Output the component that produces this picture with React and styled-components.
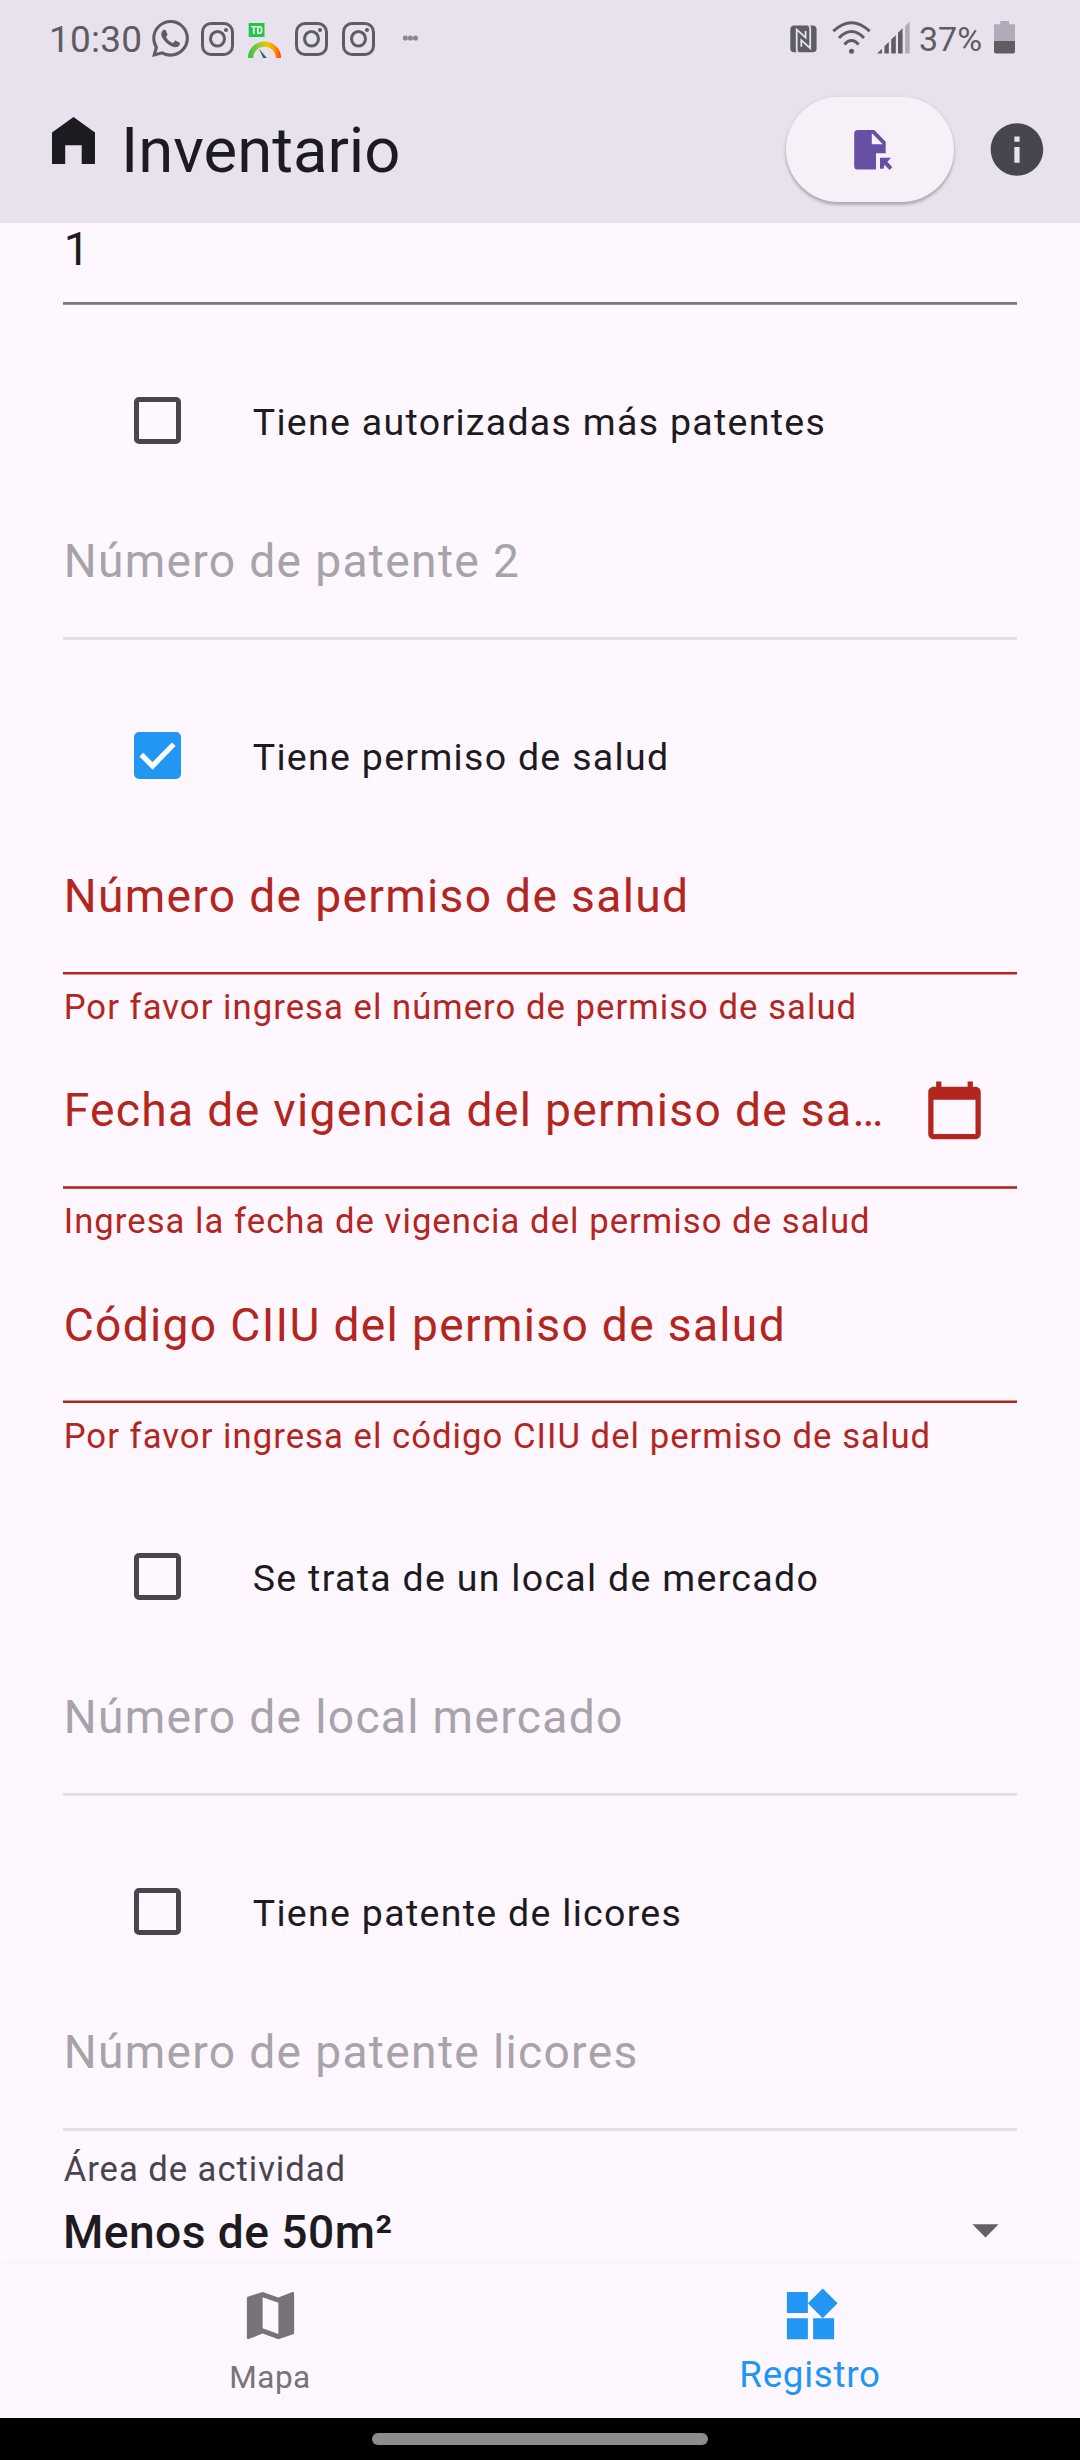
import React from "react";
import styled, { createGlobalStyle } from "styled-components";
import { SiWhatsapp } from "react-icons/si";

const color = {
  bar: "#E8E2EF",
  surface: "#FEF7FF",
  ink: "#1D1B20",
  variant: "#49454F",
  error: "#B3261E",
  blue: "#2196F3",
  status: "#5F5C62",
  disabled: "#A8A3AA",
};

const GlobalStyle = createGlobalStyle`
  * { box-sizing: border-box; }
  body {
    margin: 0;
    background: ${color.surface};
    font-family: "Roboto", "Noto Sans", sans-serif;
    color: ${color.ink};
  }
  svg { display: block; flex: none; }
`;

const Screen = styled.div`
  width: 1080px;
  height: 2460px;
  display: flex;
  flex-direction: column;
  overflow: hidden;
  background: ${color.surface};
`;

const Header = styled.header`
  height: 223px;
  flex: none;
  background: ${color.bar};
`;

const StatusBar = styled.div`
  height: 76px;
  display: flex;
  align-items: center;
  justify-content: space-between;
  padding: 0 65px 0 49px;
  color: ${color.status};
`;

const StatusGroup = styled.div`
  display: flex;
  align-items: center;
  height: 100%;
`;

const Clock = styled.span`
  width: 103px;
  font-size: 37px;
  letter-spacing: 0.25px;
  line-height: 44px;
  padding-top: 3px;
`;

const WhatsappGlyph = styled(SiWhatsapp)`
  width: 37px;
  height: 37px;
  margin-right: 12px;
`;

const Percent = styled.span`
  width: 75px;
  font-size: 34px;
  line-height: 40px;
  padding-top: 2px;
`;

const AppBar = styled.div`
  height: 147px;
  display: flex;
  align-items: center;
  padding-right: 31px;
`;

const HomeGlyph = styled.svg`
  margin: -18px 26px 0 52px;
`;

const Title = styled.h1`
  flex: 1;
  margin: 0;
  font-size: 63.4px;
  font-weight: 400;
  line-height: 76px;
`;

const PillButton = styled.button`
  width: 168px;
  height: 105px;
  margin-right: 32px;
  padding: 0;
  border: 0;
  border-radius: 53px;
  background: #f6f1f9;
  box-shadow: 0 3px 3px rgba(0, 0, 0, 0.2), 0 1px 5px rgba(0, 0, 0, 0.1);
  display: flex;
  align-items: center;
  justify-content: center;
`;

const Form = styled.main`
  flex: 1;
  min-height: 0;
  overflow: hidden;
  padding: 0 63px;
`;

const FieldBox = styled.div`
  height: ${(p) => p.$height || 156}px;
  display: flex;
  flex-direction: column;
`;

const FieldBody = styled.div`
  flex: 1;
  display: flex;
  align-items: ${(p) => (p.$top ? "flex-start" : "center")};
  justify-content: space-between;
  padding-right: ${(p) => (p.$icon ? 31 : 0)}px;
`;

const FieldText = styled.span`
  font-size: 46.2px;
  line-height: 54px;
  letter-spacing: 1.31px;
  white-space: nowrap;
  padding: 1px 0 0 0.7px;
  margin-top: ${(p) => p.$shift || 0}px;
  color: ${(p) => p.$color};
`;

const Rule = styled.div`
  height: 3px;
  flex: none;
  background: linear-gradient(
    ${(p) => p.$edges[0]} 0 1px,
    ${(p) => p.$edges[1]} 1px 2px,
    ${(p) => p.$edges[2]} 2px 3px
  );
`;

const Helper = styled.div`
  height: 58px;
  padding: ${(p) => (p.$low ? 13 : 12)}px 0 0 0.7px;
  font-size: 34.65px;
  line-height: 41px;
  letter-spacing: 1.04px;
  white-space: nowrap;
  color: ${color.error};
`;

const CheckRow = styled.label`
  height: 179px;
  display: flex;
  align-items: flex-start;
  padding: 91.5px 0 0 70.5px;
`;

const CheckBox = styled.span`
  width: 47.25px;
  height: 47.25px;
  flex: none;
  margin-right: 72px;
  border-radius: 5px;
  border: 5px solid ${(p) => (p.$on ? color.blue : color.variant)};
  background: ${(p) => (p.$on ? color.blue : "transparent")};
  display: flex;
  align-items: center;
  justify-content: center;
`;

const CheckLabel = styled.span`
  font-size: 37.5px;
  line-height: 46px;
  letter-spacing: 1.3px;
  padding-top: 2px;
  white-space: nowrap;
`;

const SelectLabel = styled.div`
  padding: 18px 0 0 0.7px;
  font-size: 34.65px;
  line-height: 40px;
  letter-spacing: 0.95px;
  color: ${color.variant};
`;

const SelectRow = styled.div`
  height: 81px;
  display: flex;
  align-items: center;
  justify-content: space-between;
`;

const SelectValue = styled.span`
  font-size: 46.2px;
  font-weight: 500;
  line-height: 54px;
  letter-spacing: 0.42px;
  padding-top: 4px;
`;

const BottomNav = styled.nav`
  height: 153px;
  flex: none;
  display: flex;
  position: relative;
  background: ${color.surface};
  box-shadow: 0 -2px 7px rgba(0, 0, 0, 0.022);
`;

const NavItem = styled.a`
  flex: 1;
  display: flex;
  flex-direction: column;
  align-items: center;
  padding-top: 19px;
  color: ${(p) => (p.$active ? color.blue : "#787279")};
`;

const NavLabel = styled.span`
  font-size: ${(p) => (p.$active ? 36.75 : 31.5)}px;
  letter-spacing: ${(p) => (p.$active ? 0.7 : 0.5)}px;
  line-height: 44px;
  margin-top: ${(p) => (p.$active ? 6 : 9)}px;
`;

const GestureBar = styled.div`
  height: 42px;
  flex: none;
  background: #000;
  display: flex;
  justify-content: center;
  padding-top: 15px;
`;

const Handle = styled.div`
  width: 336px;
  height: 12px;
  border-radius: 6px;
  background: #8c8c8c;
`;

const edges = {
  normal: ["#7A747E", "#7A747E", "#98939B"],
  disabled: ["#E2DCE4", "#E2DCE4", "#E6E0E8"],
  errorLow: ["#B3261E", "#B3261E", "#D98F8E"],
  errorMid: ["#C25049", "#B3261E", "#C25049"],
  errorHigh: ["#D98F8E", "#B3261E", "#B3261E"],
};

const Instagram = ({ width }) => (
  <svg width={width} height="40" viewBox={`0 0 ${width} 40`} fill="none" stroke="currentColor">
    <rect x="1.5" y="5.5" width="30" height="31" rx="8.5" strokeWidth="3" />
    <ellipse cx="16.5" cy="20.8" rx="7" ry="7.3" strokeWidth="3" />
    <circle cx="25" cy="12" r="2.1" fill="currentColor" stroke="none" />
  </svg>
);

const ScoreGauge = () => (
  <svg width="47" height="40" viewBox="248 18 47 40">
    <defs>
      <linearGradient id="gauge" x1="248" x2="281" y1="0" y2="0" gradientUnits="userSpaceOnUse">
        <stop offset="0" stopColor="#2FC44A" />
        <stop offset="0.35" stopColor="#9CC832" />
        <stop offset="0.6" stopColor="#F5C400" />
        <stop offset="0.8" stopColor="#FF9A00" />
        <stop offset="1" stopColor="#FF3B14" />
      </linearGradient>
    </defs>
    <rect x="248.7" y="23" width="15.8" height="14" fill="#1FC748" />
    <text x="256.7" y="34" fontSize="10.5" fontWeight="700" textAnchor="middle" fill="#fff" textLength="12" lengthAdjust="spacingAndGlyphs">
      TD
    </text>
    <path d="M250.6 58a13.9 13.9 0 0 1 27.8 0" fill="none" stroke="url(#gauge)" strokeWidth="5.2" />
    <path d="M258.8 48.6L266.8 58h-3.6z" fill="#1E6262" />
  </svg>
);

const MoreDots = () => (
  <svg width="16" height="6" viewBox="0.5 0 16 6" fill="#8B878E">
    <circle cx="2.8" cy="3" r="2.6" />
    <circle cx="7.8" cy="3" r="2.6" />
    <circle cx="12.9" cy="3" r="2.6" />
  </svg>
);

const Nfc = () => (
  <svg width="42" height="40" viewBox="790 18 42 40">
    <rect x="790.3" y="25.6" width="26.3" height="26.6" rx="4" fill="currentColor" />
    <g fill="none" stroke={color.bar} strokeWidth="1.8">
      <path d="M798 53l-1.3-2.6V29.6L805.6 37.6V31" />
      <path d="M808.9 25l1.3 2.6v20.600L801.300 40.200V46.800" />
    </g>
  </svg>
);

const Wifi = () => (
  <svg width="45" height="40" viewBox="832 18 45 40" fill="none" stroke="currentColor" strokeWidth="3">
    <circle cx="851.5" cy="51.2" r="2.5" fill="currentColor" stroke="none" />
    <path d="M844.4 44.4q7.1-7.6 14.2 0" />
    <path d="M839 38q12.5-12.8 25 0" />
    <path d="M833.3 31.2q18.2-17 36.4 0" />
  </svg>
);

const Signal = () => (
  <svg width="42" height="40" viewBox="877 18 42 40" fill="currentColor">
    <path d="M877 53.6l5-4.8v4.8zM884.4 46.2l4.4-4.3v11.7h-4.4zM891.2 39.6l4.6-4.4v18.4h-4.6zM898 32.8l4.6-4.5v25.3H898z" />
    <path d="M905.1 25.9l4.6-4.3v32h-4.6z" fill="#B1AAB9" />
  </svg>
);

const Battery = () => (
  <svg width="21" height="40" viewBox="994 18 21 40">
    <path d="M1000.2 21h8.8v3.2h6V42h-21V24.2h6.2z" fill="#B1AAB9" />
    <path d="M994 41h21v10.600a2 2 0 0 1-2 2h-17a2 2 0 0 1-2-2z" fill="currentColor" />
  </svg>
);

const FileMove = () => (
  <svg width="48" height="48" viewBox="846 125.5 48 48" fill="#6750A4">
    <path
      fillRule="evenodd"
      d="M857.8 129.6H874.2L885.7 141.2V152.8H876V169H857.8A3.6 3.6 0 0 1 854.2 165.4V133.2A3.6 3.6 0 0 1 857.8 129.6zM871.8 132.4V143.7H882.8z"
    />
    <path d="M880 157.3H891L887.4 161.3L892.3 166.7L889.6 169.5L884.5 164.2L883.6 168.3H880z" />
  </svg>
);

const Info = () => (
  <svg width="63" height="63" viewBox="0.2 0 24 24" fill={color.variant}>
    <path d="M12 2C6.48 2 2 6.48 2 12s4.48 10 10 10 10-4.48 10-10S17.52 2 12 2zm1 15h-2v-6h2v6zm0-8h-2V7h2v2z" />
  </svg>
);

const Calendar = () => (
  <svg width="63" height="63" viewBox="0 -0.3 24 24" fill={color.error}>
    <path d="M20 3h-1V1h-2v2H7V1H5v2H4c-1.1 0-2 .9-2 2v16c0 1.1.9 2 2 2h16c1.1 0 2-.9 2-2V5c0-1.1-.9-2-2-2zm0 18H4V8h16v13z" />
  </svg>
);

const MapIcon = () => (
  <svg width="63" height="63" viewBox="0 0 24 24" fill="currentColor">
    <path d="M20.5 3l-.16.03L15 5.1 9 3 3.36 4.9c-.21.07-.36.25-.36.48V20.5c0 .28.22.5.5.5l.16-.03L9 18.9l6 2.1 5.64-1.9c.21-.07.36-.25.36-.48V3.5c0-.28-.22-.5-.5-.5zM15 19l-6-2.11V5l6 2.11V19z" />
  </svg>
);

const Widgets = () => (
  <svg width="63" height="63" viewBox="0 0 24 24" fill="currentColor">
    <path d="M13 13v8h8v-8h-8zM3 21h8v-8H3v8zM3 3v8h8V3H3zm13.66-1.31L11 7.34 16.66 13l5.66-5.66-5.66-5.65z" />
  </svg>
);

const Check = ({ label, on }) => (
  <CheckRow>
    <CheckBox $on={on}>
      {on && (
        <svg width="47" height="47" viewBox="0 0 18 18" fill="none" stroke="#fff" strokeWidth="2">
          <path d="M2.8 8.7L7.1 13L15.2 4.7" />
        </svg>
      )}
    </CheckBox>
    <CheckLabel>{label}</CheckLabel>
  </CheckRow>
);

const Field = ({ label, tone, rule, helper, icon, low }) => (
  <>
    <FieldBox>
      <FieldBody $icon={!!icon}>
        <FieldText $color={tone} $shift={low ? 1.5 : 0}>{label}</FieldText>
        {icon}
      </FieldBody>
      <Rule $edges={rule} />
    </FieldBox>
    {helper && <Helper $low={low}>{helper}</Helper>}
  </>
);

export default function App() {
  return (
    <Screen>
      <GlobalStyle />
      <Header>
        <StatusBar>
          <StatusGroup>
            <Clock>10:30</Clock>
            <WhatsappGlyph />
            <Instagram width={47} />
            <ScoreGauge />
            <Instagram width={47} />
            <Instagram width={61} />
            <MoreDots />
          </StatusGroup>
          <StatusGroup>
            <Nfc />
            <Wifi />
            <Signal />
            <Percent>37%</Percent>
            <Battery />
          </StatusGroup>
        </StatusBar>
        <AppBar>
          <HomeGlyph width="43" height="47" viewBox="0 0 43 47" fill={color.ink}>
            <path d="M21.5 0L43 15.6V47H29.7V28.3H13.2V47H0V15.6z" />
          </HomeGlyph>
          <Title>Inventario</Title>
          <PillButton>
            <FileMove />
          </PillButton>
          <Info />
        </AppBar>
      </Header>

      <Form>
        <FieldBox $height={82}>
          <FieldBody $top>
            <FieldText $color={color.ink} $shift={-2}>1</FieldText>
          </FieldBody>
          <Rule $edges={edges.normal} />
        </FieldBox>
        <Check label="Tiene autorizadas más patentes" />
        <Field label="Número de patente 2" tone={color.disabled} rule={edges.disabled} />
        <Check label="Tiene permiso de salud" on />
        <Field
          label="Número de permiso de salud"
          tone={color.error}
          rule={edges.errorLow}
          helper="Por favor ingresa el número de permiso de salud"
        />
        <Field
          label="Fecha de vigencia del permiso de sa…"
          tone={color.error}
          rule={edges.errorMid}
          icon={<Calendar />}
          helper="Ingresa la fecha de vigencia del permiso de salud"
        />
        <Field
          label="Código CIIU del permiso de salud"
          tone={color.error}
          rule={edges.errorHigh}
          helper="Por favor ingresa el código CIIU del permiso de salud"
          low
        />
        <Check label="Se trata de un local de mercado" />
        <Field label="Número de local mercado" tone={color.disabled} rule={edges.disabled} />
        <Check label="Tiene patente de licores" />
        <Field label="Número de patente licores" tone={color.disabled} rule={edges.disabled} />
        <SelectLabel>Área de actividad</SelectLabel>
        <SelectRow>
          <SelectValue>Menos de 50m²</SelectValue>
          <svg width="63" height="63" viewBox="0 0 24 24" fill="#636164">
            <path d="M7 10l5 5 5-5z" />
          </svg>
        </SelectRow>
      </Form>

      <BottomNav>
        <NavItem>
          <MapIcon />
          <NavLabel>Mapa</NavLabel>
        </NavItem>
        <NavItem $active>
          <Widgets />
          <NavLabel $active>Registro</NavLabel>
        </NavItem>
      </BottomNav>
      <GestureBar>
        <Handle />
      </GestureBar>
    </Screen>
  );
}
